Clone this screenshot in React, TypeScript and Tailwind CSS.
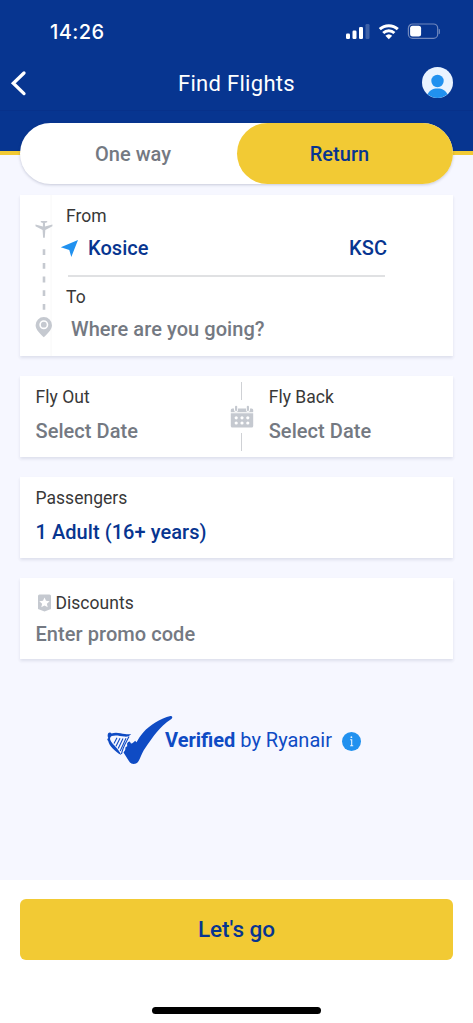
import type { ReactNode } from "react";

const Card = ({ className, children }: { className: string; children: ReactNode }) => (
  <section className={`mx-5 bg-white shadow-[0_2px_3px_rgba(30,40,80,0.11)] ${className}`}>{children}</section>
);

const Label = ({ children }: { children: ReactNode }) => (
  <span className="block h-6 whitespace-nowrap text-[17.5px] leading-6 tracking-[0.03px] text-[#383838]">{children}</span>
);

const Value = ({ children, tone = "text-[#747982]" }: { children: ReactNode; tone?: string }) => (
  <span className={`block h-6 whitespace-nowrap text-[20px] font-medium leading-6 tracking-[0.06px] ${tone}`}>{children}</span>
);

function StatusBar() {
  return (
    <div className="flex h-[62px] items-center justify-between pl-[50px] pr-[33px] pt-[2px]">
      <span className="font-[Inter,sans-serif] text-[20px] font-medium leading-6 tracking-[0.4px]">14:26</span>
      <svg width="96" height="20" viewBox="0 0 96 20" fill="none">
        <g fill="#fff">
          <rect x="2" y="11.5" width="4" height="5.5" rx="1.2" />
          <rect x="8.5" y="8.5" width="4" height="8.5" rx="1.2" />
          <rect x="15" y="5" width="4" height="12" rx="1.2" />
          <rect x="21.5" y="2" width="4" height="15" rx="1.2" opacity=".22" />
        </g>
        <g stroke="#fff" strokeWidth="3">
          <path d="M35.8 7.2a13.2 13.2 0 0 1 18 0" />
          <path d="M39.2 11a8.3 8.3 0 0 1 11.2 0" />
        </g>
        <path d="M41.4 13.8a5.1 5.1 0 0 1 6.8 0L44.8 17.2Z" fill="#fff" />
        <rect x="64.4" y="2" width="29.3" height="14.4" rx="4.2" stroke="#7188bd" strokeWidth="1.2" />
        <rect x="66.1" y="3.8" width="11" height="10.8" rx="2.5" fill="#fff" />
        <path d="M95 7v5c1.2-.7 1.2-4.3 0-5Z" fill="#7188bd" stroke="#7188bd" strokeWidth=".5" />
      </svg>
    </div>
  );
}

function NavBar() {
  return (
    <div className="grid h-[49px] grid-cols-[80px_1fr_80px] items-center border-b border-[#07318a] pb-[7px]">
      <svg className="ml-[10px]" width="18" height="26" viewBox="0 0 18 26" fill="none">
        <path d="M14 3 3.300 13.300 14 23.600" stroke="#fff" strokeWidth="3.300" strokeLinecap="round" />
      </svg>
      <h1 className="pt-[2px] text-center text-[22px] font-normal leading-7 tracking-[0.3px]">Find Flights</h1>
      <svg className="mr-5 justify-self-end" width="31" height="31" viewBox="0 0 31 31">
        <circle cx="15.5" cy="15.5" r="15.5" fill="#e9f3ff" />
        <circle cx="15.5" cy="14" r="6.2" fill="#2191ef" />
        <path d="M5.5 27.3c2-3.800 5-5.800 10-5.800s8 2 10 5.800a15.500 15.500 0 0 1-20 0Z" fill="#2191ef" />
      </svg>
    </div>
  );
}

function RouteMarker() {
  return (
    <svg className="shrink-0 overflow-visible" width="32" height="161" viewBox="0 0 32 161" fill="none">
      <path d="M31 0V161" stroke="#f8f8f8" />
      <path
        d="M20.8 26h6.400v1.200l-2.200.9v3.300l7.400-1.900v1.700L25.300 35l-.5 7.800h-1.700l-.5-7.800-7.100-3.800v-1.700l7.400 1.900v-3.300l-2.100-.9Z"
        fill="#c5c9d0"
      />
      <path d="M24 54.200v61" stroke="#c5c9d0" strokeWidth="2.600" strokeDasharray="5.800 7.900" />
      <path
        fillRule="evenodd"
        d="M23.800 122a8.200 8.200 0 0 0-8.200 8.200c0 5 5.500 9.300 8.200 12 2.700-2.700 8.200-7 8.200-12a8.200 8.200 0 0 0-8.200-8.200Zm0 3.200a4.500 4.500 0 1 1 0 9 4.500 4.500 0 0 1 0-9Z"
        fill="#c5c9d0"
      />
      <circle cx="23.800" cy="129.700" r="2.900" fill="#c5c9d0" />
    </svg>
  );
}

function CalendarDivider() {
  return (
    <div className="flex w-6 shrink-0 flex-col items-center justify-between py-[6px]">
      <i className="-ml-px h-[18px] w-px bg-[#cfd1d5]" />
      <svg width="24" height="24" viewBox="0 0 24 24" fill="#c5c9d0">
        <path d="M2.300 3.500H4V5a2 2 0 0 0 4 0V3.500h8V5a2 2 0 0 0 4 0V3.500h1.700A1.500 1.500 0 0 1 23.200 5v2.300H.8V5a1.500 1.500 0 0 1 1.500-1.500Z" />
        <path d="M.8 8.200h22.400v12.900a1.500 1.500 0 0 1-1.500 1.500H2.300a1.500 1.500 0 0 1-1.500-1.500Z" />
        <rect x="5" y=".7" width="2.200" height="5.300" rx="1" />
        <rect x="16.800" y=".7" width="2.200" height="5.300" rx="1" />
        <g fill="#fff">
          <circle cx="6.200" cy="12.800" r="1.600" />
          <circle cx="12" cy="12.800" r="1.600" />
          <circle cx="17.800" cy="12.800" r="1.600" />
          <circle cx="6.200" cy="18" r="1.600" />
          <circle cx="12" cy="18" r="1.600" />
          <circle cx="17.800" cy="18" r="1.600" />
        </g>
      </svg>
      <i className="-ml-px h-[18px] w-px bg-[#cfd1d5]" />
    </div>
  );
}

function HarpTick() {
  return (
    <svg className="shrink-0" width="68" height="52" viewBox="0 0 68 52" fill="none">
      <path
        d="M65.500 2c1.900-.2 2.500 1.800.9 3-3 2-5.800 4-8.400 6.500-4.500 4.200-8 8.500-11.300 13.200-3 4-5.700 7.800-8.100 11.800-1.900 3.200-2.800 6.500-4.300 9.200-1.200 2.700-3 4.300-5.600 4.300-2.200 0-3.700-1.200-4.800-3L18.500 38.500l1.700-2.600.3-2.700 1.700-1-.1-2.600c.7-1.300 1.600-2.200 2.700-2.100l1.200 1.900c1.600.1 2.800-1.100 4.100-2.600l1.400 1.500c2-3.400 3.800-6.800 6.700-9.900C45.300 10.800 55.500 4.500 65.500 2Z"
        fill="#0f4bc4"
      />
      <path
        fillRule="evenodd"
        d="M3.200 19.200c1.200-1 2.800-.6 3.300.4 4.500-1.700 9-.1 13.500.5 2.300.3 4.200.2 6.200 0-1.400 1.900-3.700 2.800-6.700 2.500-4.800-.6-9-1.900-12.700-.5-1.500.9-2.200 2.300-1.500 4 2.600 5.200 8.300 8.700 11 15-6.600-4-11.800-8.900-13.100-14.200-1.400-.9-1.100-2 .1-2.800-.9-1.800-.8-3.700-.1-4.900Z"
        fill="#0f4bc4"
      />
      <g stroke="#0f4bc4" strokeWidth="1.100">
        <path d="M12 23.800 9 29.500M15 24.200 11 32.300M18 24.500 13.200 34.500M21 24.300 15.200 37M24 22.500c-1.700 4-6 9.500-7.500 17.500" />
      </g>
    </svg>
  );
}

export default function App() {
  return (
    <div className="flex h-[1023px] w-[473px] flex-col overflow-hidden bg-[#f6f7ff] font-[Roboto,sans-serif]">
      <header className="h-[155px] shrink-0 border-b-4 border-[#f2ca34] bg-[#073590] text-white">
        <StatusBar />
        <NavBar />
      </header>

      <div className="relative z-10 mx-5 -mt-8 flex h-[60.5px] shrink-0 rounded-full bg-white text-[20px] font-medium tracking-[0.05px] shadow-[0_1px_3px_rgba(30,40,80,0.22)]">
        <button className="w-[217px] pl-[9px] pt-px text-[#747982]">One way</button>
        <button className="w-[216px] rounded-full bg-[#f2ca34] pr-[11px] pt-px text-[#073590]">Return</button>
      </div>

      <Card className="mt-[11.5px] flex h-[161px] shrink-0">
        <RouteMarker />
        <div className="flex w-[335px] flex-col pt-[9px]">
          <div className="pl-[14px]"><Label>From</Label></div>
          <div className="mt-[8px] flex items-center pl-[8px]">
            <svg width="20" height="20" viewBox="0 0 20 20">
              <path d="M.8 9.300 18 2 11.300 19 9.300 12Z" fill="#2191ef" />
            </svg>
            <div className="ml-2 flex-1"><Value tone="text-[#073590]">Kosice</Value></div>
            <Value tone="text-[#073590]">KSC</Value>
          </div>
          <div className="ml-[15.500px] mr-[2px] mt-[15px] h-[1.5px] bg-[#e0e1e3]" />
          <div className="mt-[8.5px] pl-[14px]"><Label>To</Label></div>
          <div className="mt-[8px] pl-[19px]"><Value>Where are you going?</Value></div>
        </div>
      </Card>

      <Card className="mt-5 flex h-[81px] shrink-0">
        <div className="flex w-[210px] flex-col gap-[10px] pl-[15.5px] pt-[9px]">
          <Label>Fly Out</Label>
          <Value>Select Date</Value>
        </div>
        <CalendarDivider />
        <div className="flex flex-col gap-[10px] pl-[14.7px] pt-[9px]">
          <Label>Fly Back</Label>
          <Value>Select Date</Value>
        </div>
      </Card>

      <Card className="mt-5 flex h-[81px] shrink-0 flex-col gap-[10px] pl-[15.5px] pt-[9px]">
        <Label>Passengers</Label>
        <Value tone="text-[#073590]">1 Adult (16+ years)</Value>
      </Card>

      <Card className="mt-5 flex h-[81px] shrink-0 flex-col gap-[7px] pl-[15.5px] pt-[13px]">
        <div className="flex items-center">
          <svg className="ml-[2px] mr-[4px]" width="14" height="18" viewBox="0 0 14 18">
            <path d="M1.5.5h10A1.5 1.5 0 0 1 13 2v13l-6.500 2.500L0 15V2A1.5 1.5 0 0 1 1.5.5Z" fill="#c5c9d0" />
            <path d="m6.500 3.500 1.500 3.300 3.700.4-2.800 2.500.8 3.600-3.200-1.900-3.200 1.900.8-3.600-2.800-2.500 3.700-.4Z" fill="#fff" />
          </svg>
          <Label>Discounts</Label>
        </div>
        <Value>Enter promo code</Value>
      </Card>

      <div className="mt-[55px] flex h-[52px] shrink-0 items-center pl-[105px] text-[20px] text-[#0f4bc4]">
        <HarpTick />
        <span className="-ml-[8px] whitespace-nowrap"><b className="font-bold">Verified</b> by Ryanair</span>
        <svg className="ml-[10px] mt-[2px]" width="19" height="19" viewBox="0 0 19 19">
          <circle cx="9.5" cy="9.5" r="9.5" fill="#2191ef" />
          <path d="M8.200 7.800h1.500v6M8.200 13.800h3" stroke="#e8f4ff" strokeWidth="1.100" fill="none" />
          <circle cx="9.400" cy="5.200" r=".9" fill="#e8f4ff" />
        </svg>
      </div>

      <footer className="mt-auto flex h-[143px] shrink-0 flex-col items-center bg-white pt-[19px]">
        <button className="h-[61px] w-[433px] rounded-[6px] bg-[#f2ca34] text-[22.5px] font-medium text-[#073590]">Let's go</button>
        <div className="mt-[47px] h-[6.5px] w-[169px] rounded-full bg-black" />
      </footer>
    </div>
  );
}
